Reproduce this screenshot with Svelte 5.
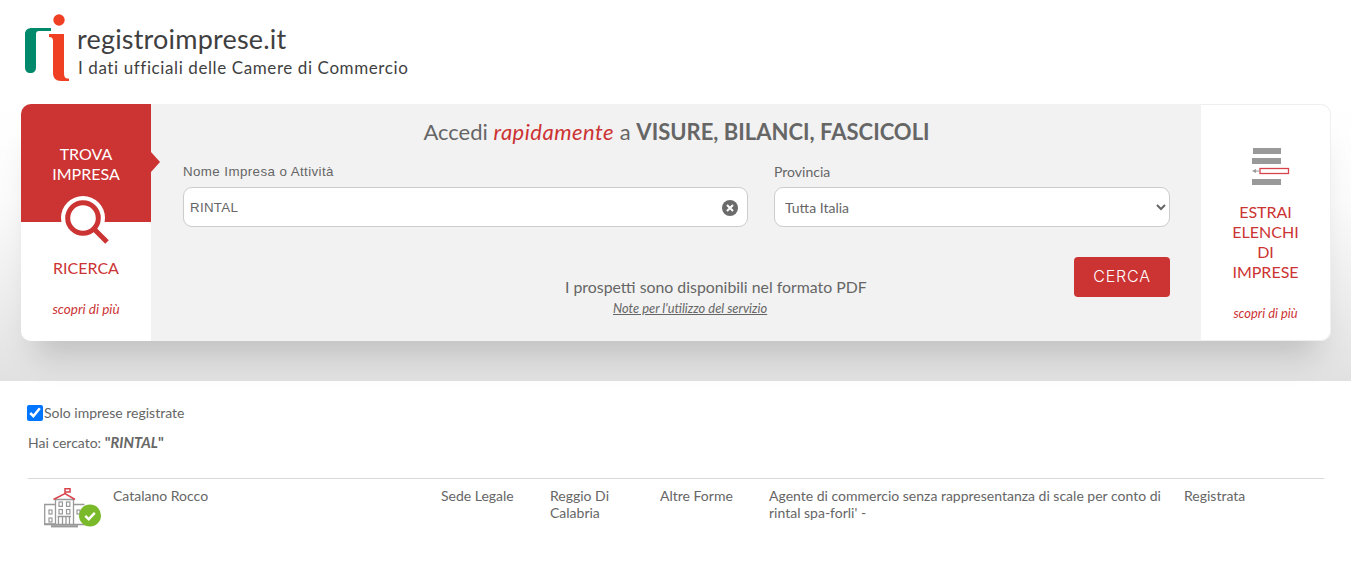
<script>
  let nome = $state('RINTAL');
  let solo = $state(true);
</script>

<div class="page">
  <header class="brand">
    <svg class="logo" viewBox="0 0 46 68" width="46" height="68" aria-hidden="true">
      <path fill="#00896b" d="M0 20C0 16 3 14 7 14H26V17H14C12 17 11 18 11 20V53.500C11 57 9 59 5.500 59C2 59 0 57 0 53.500Z"/>
      <circle cx="34" cy="6" r="5.700" fill="#ef4023"/>
      <path fill="#ef4023" d="M24 20H39V59C39 62.500 40 64 42 64.500H44V67H36C31 67 28 64 28 59V26.500C28 24 26.500 23 24 23Z"/>
    </svg>
    <div class="brand-text">
      <div class="brand-name">registroimprese.it</div>
      <div class="brand-sub">I dati ufficiali delle Camere di Commercio</div>
    </div>
  </header>

  <section class="band">
    <div class="card">
      <aside class="side left">
        <div class="side-top">
          <span>TROVA<br />IMPRESA</span>
        </div>
        <svg class="lens" viewBox="0 0 52 54" width="52" height="54" aria-hidden="true">
          <circle cx="23" cy="23" r="22" fill="#fff"/>
          <circle cx="23" cy="23" r="15.300" fill="#fff" stroke="#cc3333" stroke-width="5"/>
          <path d="M33 33L47 47" stroke="#cc3333" stroke-width="5" fill="none"/>
        </svg>
        <div class="side-bottom">
          <div class="side-title">RICERCA</div>
          <a class="more" href="#ricerca">scopri di più</a>
        </div>
      </aside>

      <main class="center">
        <h1>Accedi <em>rapidamente</em> a <strong>VISURE, BILANCI, FASCICOLI</strong></h1>
        <div class="fields">
          <div class="field">
            <label for="nome">Nome Impresa o Attività</label>
            <div class="input-wrap">
              <input id="nome" bind:value={nome} />
              <svg class="clear" viewBox="0 0 16 16" width="16" height="16" aria-hidden="true">
                <circle cx="8" cy="8" r="8" fill="#6b6b6b"/>
                <path d="M5 5L11 11M11 5L5 11" stroke="#fff" stroke-width="2" fill="none"/>
              </svg>
            </div>
          </div>
          <div class="field">
            <label class="lato" for="prov">Provincia</label>
            <select id="prov"><option>Tutta Italia</option></select>
          </div>
        </div>
        <div class="actions">
          <div class="info">
            <p class="pdf">I prospetti sono disponibili nel formato PDF</p>
            <a class="note" href="#note">Note per l'utilizzo del servizio</a>
          </div>
          <button type="button">CERCA</button>
        </div>
      </main>

      <aside class="side right">
        <svg class="list" viewBox="0 0 38 37" width="38" height="37" aria-hidden="true">
          <rect x="1" y="0" width="28" height="6" fill="#999"/>
          <rect x="0" y="10" width="29" height="6" fill="#999"/>
          <rect x="8" y="20.500" width="28.500" height="5" fill="#fff" stroke="#d8434a" stroke-width="1.300"/>
          <path d="M0 23L4 21V22.500H8V23.500H4V25Z" fill="#999"/>
          <rect x="0" y="31" width="29" height="6" fill="#999"/>
        </svg>
        <div class="side-title stack">ESTRAI<br />ELENCHI<br />DI<br />IMPRESE</div>
        <a class="more" href="#elenchi">scopri di più</a>
      </aside>
    </div>
  </section>

  <section class="results">
    <label class="check"><input type="checkbox" bind:checked={solo} />Solo imprese registrate</label>
    <p class="query">Hai cercato: <b>"<i>RINTAL</i>"</b></p>
    <div class="row">
      <div class="icon-cell">
        <svg viewBox="0 0 58 40" width="58" height="40" aria-hidden="true">
          <g fill="none" stroke="#999" stroke-width="1.300">
            <path d="M11.500 36V11.500H29.500V36"/>
            <path d="M11.500 16.500H0.700V36H11.500M29.500 16.500H40.500"/>
            <path d="M14.500 36V29M18.500 36V29M22 36V29M25.500 36V29M13.500 28.500H27"/>
            <path d="M0 36.500H41"/>
          </g>
          <path d="M7 38.300H34" stroke="#999" stroke-width="2.200" fill="none"/>
          <g fill="none" stroke="#999" stroke-width="1.200">
            <rect x="15" y="14" width="3.400" height="4.400"/>
            <rect x="22.500" y="14" width="3.400" height="4.400"/>
            <rect x="15" y="21.500" width="3.400" height="4.400"/>
            <rect x="22.500" y="21.500" width="3.400" height="4.400"/>
            <rect x="5" y="22" width="3" height="4"/>
            <rect x="5" y="30" width="3" height="4"/>
            <rect x="33" y="22" width="3" height="4"/>
          </g>
          <path d="M9.500 11.500L21 5.700L31 11.500" fill="none" stroke="#d8434a" stroke-width="1.500"/>
          <path d="M21 6V0.800H26V4H21.500" fill="none" stroke="#d8434a" stroke-width="1.500"/>
          <circle cx="46" cy="27.500" r="11" fill="#7ab929"/>
          <path d="M41.200 27.800L44.700 31.200L50.800 24.800" fill="none" stroke="#fff" stroke-width="2.400"/>
        </svg>
      </div>
      <div>Catalano Rocco</div>
      <div>Sede Legale</div>
      <div>Reggio Di Calabria</div>
      <div>Altre Forme</div>
      <div>Agente di commercio senza rappresentanza di scale per conto di rintal spa-forli' -</div>
      <div>Registrata</div>
    </div>
  </section>
</div>

<style>
  :global(body) {
    margin: 0;
    background: #fff;
    font-family: Lato, "Liberation Sans", sans-serif;
    color: #666;
  }
  .page { width: 1351px; height: 576px; overflow: hidden; background: #fff; }

  .brand { height: 104px; box-sizing: border-box; padding: 14px 0 0 25px; display: flex; gap: 6px; }
  .logo { display: block; flex: none; }
  .brand-text { color: #3f3f42; font-family: Lato, sans-serif; padding-top: 7px; }
  .brand-name { font-size: 27px; line-height: 35px; letter-spacing: 0.2px; white-space: nowrap; }
  .brand-sub { font-size: 17px; line-height: 24px; letter-spacing: 0.6px; white-space: nowrap; margin-left: 1px; }

  .band {
    height: 277px;
    box-sizing: border-box;
    padding: 0 20px 0 21px;
    background: linear-gradient(#fff 0, #fbfbfb 35%, #e1e1e1 100%);
  }
  .card {
    height: 237px;
    display: grid;
    grid-template-columns: 130px 1fr 130px;
    background: #f2f2f2;
    border-radius: 10px;
    box-shadow: 0 28px 30px -14px rgba(0, 0, 0, 0.17);
    position: relative;
  }

  .side { background: #fff; color: #cc3333; text-align: center; position: relative; box-sizing: border-box; }
  .left { border-radius: 10px 0 0 10px; }
  .right {
    border-radius: 0 10px 10px 0;
    border: 1px solid #efefef;
    border-left: 0;
    padding-top: 43px;
  }
  .side-top {
    height: 118px;
    box-sizing: border-box;
    background: #cc3333;
    border-radius: 10px 0 0 0;
    color: #fff;
    padding-top: 40px;
    font-size: 16px;
    line-height: 20px;
    position: relative;
  }
  .side-top::after {
    content: "";
    position: absolute;
    left: 130px;
    top: 48px;
    border-left: 9px solid #cc3333;
    border-top: 10px solid transparent;
    border-bottom: 10px solid transparent;
  }
  .lens { position: absolute; left: 39px; top: 91px; }
  .side-bottom { padding-top: 36px; }
  .side-title { font-size: 16px; line-height: 20px; }
  .stack { margin-top: 17px; }
  .more { display: block; font-size: 13.5px; line-height: 16px; font-style: italic; color: #cc3333; text-decoration: none; }
  .left .more { margin-top: 23px; }
  .right .more { margin-top: 23px; font-size: 12.9px; }
  .list { display: block; margin: 0 0 0 51px; }

  .center { padding: 0 31px 0 32px; min-width: 0; }
  h1 { margin: 0; padding-top: 13px; font-size: 22px; line-height: 29px; font-weight: 400; text-align: center; color: #666; }
  h1 em { color: #cc3333; letter-spacing: 0.5px; }
  h1 strong { font-weight: 700; font-size: 22px; }
  .fields { display: grid; grid-template-columns: 565px 396px; column-gap: 26px; margin-top: 17px; }
  label[for="nome"] { font-family: "Liberation Sans", sans-serif; font-size: 13.33px; letter-spacing: 0.41px; }
  .field label { display: block; line-height: 17px; margin-bottom: 7px; }
  .lato { font-size: 14px; }
  .input-wrap { position: relative; }
  input#nome, select {
    display: block;
    width: 100%;
    height: 40px;
    box-sizing: border-box;
    border: 1px solid #ccc;
    border-radius: 9px;
    background: #fff;
    color: #666;
    font-family: Lato, sans-serif;
    font-size: 14px;
    outline: none;
  }
  input#nome { padding: 0 40px 0 6px; font-family: "Liberation Sans", sans-serif; font-size: 13.33px; letter-spacing: 0.3px; }
  select { padding: 0 6px; }
  .clear { position: absolute; right: 10px; top: 13px; }
  .actions { position: relative; display: flex; justify-content: flex-end; margin-top: 30px; height: 54px; }
  .info { position: absolute; left: 0; right: 0; top: 20px; }
  .pdf { margin: 0; padding-left: 382px; font-size: 15.85px; line-height: 19px; white-space: nowrap; }
  .note { display: block; margin: 5px 0 0 430px; font-size: 12.9px; line-height: 15px; font-style: italic; color: #666; }
  button {
    position: relative;
    width: 96px;
    height: 40px;
    border: 0;
    border-radius: 4px;
    padding: 0 0 2px;
    background: #cc3333;
    color: #fff;
    font-family: Inter, Lato, sans-serif;
    font-weight: 300;
    font-size: 16px;
    letter-spacing: 0.8px;
  }

  .results { padding: 23px 27px 0 28px; font-size: 14px; line-height: 17px; }
  .check { display: flex; align-items: center; margin-left: -1px; height: 17px; }
  .check input { width: 16px; height: 16px; margin: 0 1px 0 0; flex: none; }
  .query { margin: 13px 0 0; }
  .query b { font-size: 14.7px; }
  .row {
    margin-top: 27px;
    border-top: 1px solid #d9d9d9;
    padding-top: 8px;
    display: grid;
    grid-template-columns: 85px 328px 109px 110px 109px 415px 1fr;
  }
  .row > div:nth-child(6) { padding-right: 10px; }
  .icon-cell svg { display: block; margin: 1px 0 0 16px; }
</style>
